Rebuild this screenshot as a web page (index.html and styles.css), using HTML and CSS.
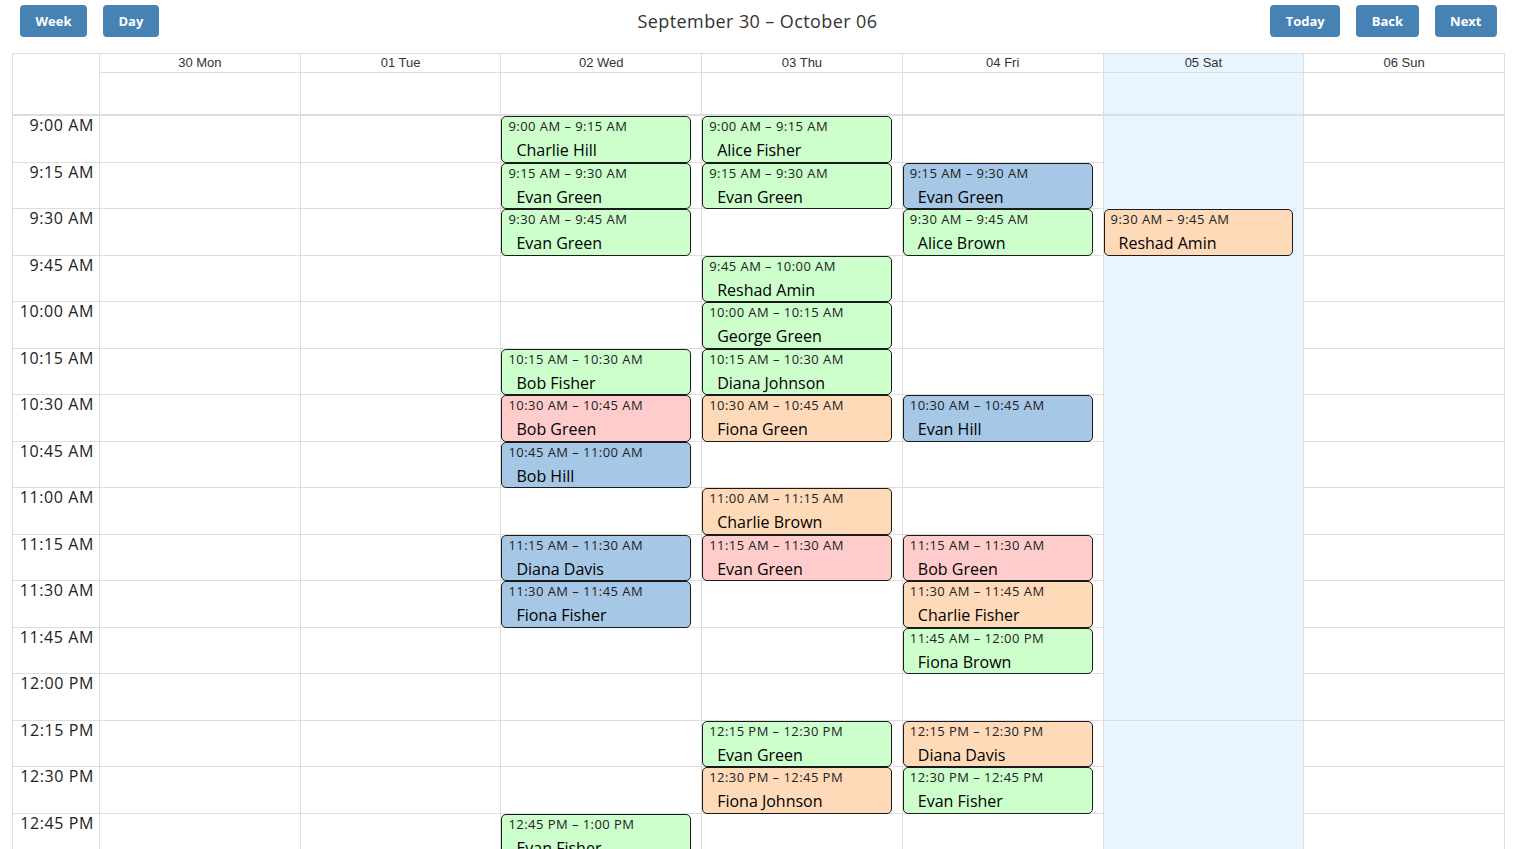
FILE: index.html
```html
<!DOCTYPE html>
<html lang="en">
<head>
<meta charset="utf-8">
<title>Calendar</title>
<link rel="stylesheet" href="styles.css">
</head>
<body>
<div class="page">
  <div class="toolbar">
    <div class="group left">
      <button class="btn">Week</button>
      <button class="btn">Day</button>
    </div>
    <div class="title">September 30 – October 06</div>
    <div class="group right">
      <button class="btn">Today</button>
      <button class="btn">Back</button>
      <button class="btn">Next</button>
    </div>
  </div>

  <div class="cal">
    <div class="head">
      <div class="gutter-head"></div>
      <div class="day-label">30 Mon</div>
      <div class="day-label">01 Tue</div>
      <div class="day-label">02 Wed</div>
      <div class="day-label">03 Thu</div>
      <div class="day-label">04 Fri</div>
      <div class="day-label weekend">05 Sat</div>
      <div class="day-label">06 Sun</div>
      <div class="allday"></div>
      <div class="allday"></div>
      <div class="allday"></div>
      <div class="allday"></div>
      <div class="allday"></div>
      <div class="allday weekend"></div>
      <div class="allday"></div>
    </div>

    <div class="body">
      <div class="row">
        <div class="time">9:00 AM</div>
        <div class="cell"></div><div class="cell"></div>
        <div class="cell"><div class="ev green"><div class="ev-time">9:00 AM – 9:15 AM</div><div class="ev-name">Charlie Hill</div></div></div>
        <div class="cell"><div class="ev green"><div class="ev-time">9:00 AM – 9:15 AM</div><div class="ev-name">Alice Fisher</div></div></div>
        <div class="cell"></div><div class="cell weekend"></div><div class="cell"></div>
      </div>
      <div class="row">
        <div class="time">9:15 AM</div>
        <div class="cell"></div><div class="cell"></div>
        <div class="cell"><div class="ev green"><div class="ev-time">9:15 AM – 9:30 AM</div><div class="ev-name">Evan Green</div></div></div>
        <div class="cell"><div class="ev green"><div class="ev-time">9:15 AM – 9:30 AM</div><div class="ev-name">Evan Green</div></div></div>
        <div class="cell"><div class="ev blue"><div class="ev-time">9:15 AM – 9:30 AM</div><div class="ev-name">Evan Green</div></div></div>
        <div class="cell weekend"></div><div class="cell"></div>
      </div>
      <div class="row">
        <div class="time">9:30 AM</div>
        <div class="cell"></div><div class="cell"></div>
        <div class="cell"><div class="ev green"><div class="ev-time">9:30 AM – 9:45 AM</div><div class="ev-name">Evan Green</div></div></div>
        <div class="cell"></div>
        <div class="cell"><div class="ev green"><div class="ev-time">9:30 AM – 9:45 AM</div><div class="ev-name">Alice Brown</div></div></div>
        <div class="cell weekend"><div class="ev peach"><div class="ev-time">9:30 AM – 9:45 AM</div><div class="ev-name">Reshad Amin</div></div></div>
        <div class="cell"></div>
      </div>
      <div class="row">
        <div class="time">9:45 AM</div>
        <div class="cell"></div><div class="cell"></div><div class="cell"></div>
        <div class="cell"><div class="ev green"><div class="ev-time">9:45 AM – 10:00 AM</div><div class="ev-name">Reshad Amin</div></div></div>
        <div class="cell"></div><div class="cell weekend"></div><div class="cell"></div>
      </div>
      <div class="row">
        <div class="time">10:00 AM</div>
        <div class="cell"></div><div class="cell"></div><div class="cell"></div>
        <div class="cell"><div class="ev green"><div class="ev-time">10:00 AM – 10:15 AM</div><div class="ev-name">George Green</div></div></div>
        <div class="cell"></div><div class="cell weekend"></div><div class="cell"></div>
      </div>
      <div class="row">
        <div class="time">10:15 AM</div>
        <div class="cell"></div><div class="cell"></div>
        <div class="cell"><div class="ev green"><div class="ev-time">10:15 AM – 10:30 AM</div><div class="ev-name">Bob Fisher</div></div></div>
        <div class="cell"><div class="ev green"><div class="ev-time">10:15 AM – 10:30 AM</div><div class="ev-name">Diana Johnson</div></div></div>
        <div class="cell"></div><div class="cell weekend"></div><div class="cell"></div>
      </div>
      <div class="row">
        <div class="time">10:30 AM</div>
        <div class="cell"></div><div class="cell"></div>
        <div class="cell"><div class="ev pink"><div class="ev-time">10:30 AM – 10:45 AM</div><div class="ev-name">Bob Green</div></div></div>
        <div class="cell"><div class="ev peach"><div class="ev-time">10:30 AM – 10:45 AM</div><div class="ev-name">Fiona Green</div></div></div>
        <div class="cell"><div class="ev blue"><div class="ev-time">10:30 AM – 10:45 AM</div><div class="ev-name">Evan Hill</div></div></div>
        <div class="cell weekend"></div><div class="cell"></div>
      </div>
      <div class="row">
        <div class="time">10:45 AM</div>
        <div class="cell"></div><div class="cell"></div>
        <div class="cell"><div class="ev blue"><div class="ev-time">10:45 AM – 11:00 AM</div><div class="ev-name">Bob Hill</div></div></div>
        <div class="cell"></div><div class="cell"></div><div class="cell weekend"></div><div class="cell"></div>
      </div>
      <div class="row">
        <div class="time">11:00 AM</div>
        <div class="cell"></div><div class="cell"></div><div class="cell"></div>
        <div class="cell"><div class="ev peach"><div class="ev-time">11:00 AM – 11:15 AM</div><div class="ev-name">Charlie Brown</div></div></div>
        <div class="cell"></div><div class="cell weekend"></div><div class="cell"></div>
      </div>
      <div class="row">
        <div class="time">11:15 AM</div>
        <div class="cell"></div><div class="cell"></div>
        <div class="cell"><div class="ev blue"><div class="ev-time">11:15 AM – 11:30 AM</div><div class="ev-name">Diana Davis</div></div></div>
        <div class="cell"><div class="ev pink"><div class="ev-time">11:15 AM – 11:30 AM</div><div class="ev-name">Evan Green</div></div></div>
        <div class="cell"><div class="ev pink"><div class="ev-time">11:15 AM – 11:30 AM</div><div class="ev-name">Bob Green</div></div></div>
        <div class="cell weekend"></div><div class="cell"></div>
      </div>
      <div class="row">
        <div class="time">11:30 AM</div>
        <div class="cell"></div><div class="cell"></div>
        <div class="cell"><div class="ev blue"><div class="ev-time">11:30 AM – 11:45 AM</div><div class="ev-name">Fiona Fisher</div></div></div>
        <div class="cell"></div>
        <div class="cell"><div class="ev peach"><div class="ev-time">11:30 AM – 11:45 AM</div><div class="ev-name">Charlie Fisher</div></div></div>
        <div class="cell weekend"></div><div class="cell"></div>
      </div>
      <div class="row">
        <div class="time">11:45 AM</div>
        <div class="cell"></div><div class="cell"></div><div class="cell"></div><div class="cell"></div>
        <div class="cell"><div class="ev green"><div class="ev-time">11:45 AM – 12:00 PM</div><div class="ev-name">Fiona Brown</div></div></div>
        <div class="cell weekend"></div><div class="cell"></div>
      </div>
      <div class="row">
        <div class="time">12:00 PM</div>
        <div class="cell"></div><div class="cell"></div><div class="cell"></div><div class="cell"></div><div class="cell"></div><div class="cell weekend"></div><div class="cell"></div>
      </div>
      <div class="row">
        <div class="time">12:15 PM</div>
        <div class="cell"></div><div class="cell"></div><div class="cell"></div>
        <div class="cell"><div class="ev green"><div class="ev-time">12:15 PM – 12:30 PM</div><div class="ev-name">Evan Green</div></div></div>
        <div class="cell"><div class="ev peach"><div class="ev-time">12:15 PM – 12:30 PM</div><div class="ev-name">Diana Davis</div></div></div>
        <div class="cell weekend"></div><div class="cell"></div>
      </div>
      <div class="row">
        <div class="time">12:30 PM</div>
        <div class="cell"></div><div class="cell"></div><div class="cell"></div>
        <div class="cell"><div class="ev peach"><div class="ev-time">12:30 PM – 12:45 PM</div><div class="ev-name">Fiona Johnson</div></div></div>
        <div class="cell"><div class="ev green"><div class="ev-time">12:30 PM – 12:45 PM</div><div class="ev-name">Evan Fisher</div></div></div>
        <div class="cell weekend"></div><div class="cell"></div>
      </div>
      <div class="row">
        <div class="time">12:45 PM</div>
        <div class="cell"></div><div class="cell"></div>
        <div class="cell"><div class="ev green"><div class="ev-time">12:45 PM – 1:00 PM</div><div class="ev-name">Evan Fisher</div></div></div>
        <div class="cell"></div><div class="cell"></div><div class="cell weekend"></div><div class="cell"></div>
      </div>
      <div class="row">
        <div class="time">1:00 PM</div>
        <div class="cell"></div><div class="cell"></div><div class="cell"></div><div class="cell"></div><div class="cell"></div><div class="cell weekend"></div><div class="cell"></div>
      </div>
    </div>
  </div>
</div>
</body>
</html>
```

FILE: styles.css
```css
* { box-sizing: border-box; }

html, body {
  margin: 0;
  padding: 0;
  background: #fff;
  overflow: hidden;
}

.page {
  padding: 5px 14px 0 12px;
  font-family: "Open Sans", "Liberation Sans", sans-serif;
  color: #222;
}

.toolbar {
  display: grid;
  grid-template-columns: 1fr auto 1fr;
  align-items: center;
  height: 32px;
  padding: 0 8px;
  margin-bottom: 16px;
}

.group {
  display: flex;
  gap: 16px;
}

.group.right { justify-content: flex-end; padding-right: 0; }

.btn {
  height: 32px;
  padding: 0 15.5px;
  border: none;
  border-radius: 4px;
  background: #4682b4;
  color: #fff;
  font-family: "Open Sans", "Liberation Sans", sans-serif;
  font-weight: 700;
  font-size: 13px;
  cursor: pointer;
}

.title {
  font-size: 18px;
  color: #333;
  text-align: center;
  letter-spacing: 0.4px;
  padding-right: 2px;
}

.cal {
  width: 1493px;
  border: 1px solid #ddd;
  border-bottom: none;
}

.head {
  display: grid;
  grid-template-columns: 86px repeat(7, 1fr);
  grid-template-rows: 19px 41px;
  border-bottom: 2px solid #ddd;
}

.gutter-head {
  grid-row: 1 / span 2;
}

.day-label {
  border-left: 1px solid #ddd;
  border-bottom: 1px solid #ddd;
  text-align: center;
  font-family: "Liberation Sans", Arial, sans-serif;
  font-size: 13px;
  line-height: 18px;
  color: #333;
}

.allday {
  border-left: 1px solid #ddd;
}

.weekend { background: #e8f4fe; }

.row {
  display: grid;
  grid-template-columns: 86px repeat(7, 1fr);
  height: 46.5px;
  border-bottom: 1px solid #ddd;
}

.time {
  text-align: right;
  padding: 0 5px 0 0;
  font-size: 16px;
  line-height: 19px;
  letter-spacing: 0.6px;
  color: #222;
}

.cell {
  border-left: 1px solid #ddd;
  min-width: 0;
}

.ev {
  width: 95%;
  height: 46.5px;
  border: 1px solid #1a1a1a;
  border-radius: 5px;
  padding: 0 6px;
  color: #000;
  overflow: hidden;
  position: relative;
  z-index: 1;
}

.ev-time {
  font-size: 13px;
  line-height: 18px;
  letter-spacing: 0.45px;
  color: #222;
  white-space: nowrap;
}

.ev-name {
  font-size: 16px;
  line-height: 22px;
  margin-top: 4px;
  padding-left: 8px;
  white-space: nowrap;
}

.green { background: #ccffcc; }
.blue  { background: #a7c7e7; }
.pink  { background: #ffcccc; }
.peach { background: #ffdab9; }
```
